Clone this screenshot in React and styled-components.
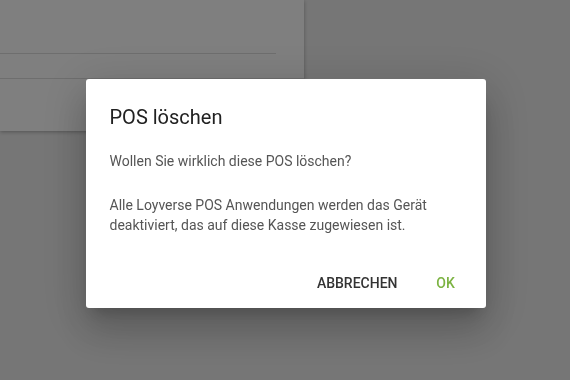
import React from "react";
import styled, { createGlobalStyle } from "styled-components";

const GlobalStyle = createGlobalStyle`
  html, body {
    margin: 0;
    padding: 0;
    background: #ededed;
    font-family: Roboto, "Liberation Sans", sans-serif;
    width: 570px;
    height: 380px;
    overflow: hidden;
  }
`;

const Page = styled.div`
  width: 570px;
  height: 380px;
`;

const Card = styled.div`
  width: 304px;
  background: #fff;
  box-shadow: 0 1px 4px rgba(0, 0, 0, 0.3);
`;

const CardRow = styled.div`
  height: ${(p) => p.h}px;
  margin-right: ${(p) => p.inset || 0}px;
  border-bottom: ${(p) => (p.line ? "1px solid #dcdcdc" : "none")};
`;

const Overlay = styled.div`
  position: fixed;
  inset: 0;
  background: rgba(0, 0, 0, 0.5);
  display: flex;
  align-items: flex-start;
  justify-content: center;
  padding-top: 79px;
  padding-left: 1px;
`;

const Dialog = styled.div`
  width: 400px;
  background: #fff;
  border-radius: 3px;
  box-shadow: 0 11px 15px -7px rgba(0, 0, 0, 0.2),
    0 24px 38px 3px rgba(0, 0, 0, 0.14), 0 9px 46px 8px rgba(0, 0, 0, 0.12);
  display: flex;
  flex-direction: column;
`;

const Title = styled.h2`
  margin: 0;
  padding: 24px 24px 20px;
  font-size: 20px;
  line-height: 28px;
  font-weight: 400;
  color: #212121;
`;

const Content = styled.div`
  padding: 0 24px 24px;
`;

const Text = styled.p`
  margin: 0 0 24px;
  font-size: 14px;
  line-height: 20px;
  color: #555;
  &:last-child {
    margin-bottom: 0;
  }
`;

const Actions = styled.div`
  display: flex;
  justify-content: flex-end;
  gap: 8px;
  padding: 6px 8px 7px;
`;

const Button = styled.button`
  min-width: 64px;
  height: 36px;
  padding: 0 8px;
  border: none;
  background: transparent;
  border-radius: 2px;
  font-family: Roboto, "Liberation Sans", sans-serif;
  font-size: 14px;
  font-weight: 500;
  text-transform: uppercase;
  color: ${(p) => (p.primary ? "#7cb342" : "#333")};
  cursor: pointer;
`;

export default function App() {
  return (
    <>
      <GlobalStyle />
      <Page>
        <Card>
          <CardRow h={53} inset={28} line />
          <CardRow h={24} line />
          <CardRow h={52} />
        </Card>
      </Page>
      <Overlay>
        <Dialog>
          <Title>POS löschen</Title>
          <Content>
            <Text>Wollen Sie wirklich diese POS löschen?</Text>
            <Text>
              Alle Loyverse POS Anwendungen werden das Gerät deaktiviert, das
              auf diese Kasse zugewiesen ist.
            </Text>
          </Content>
          <Actions>
            <Button>Abbrechen</Button>
            <Button primary>OK</Button>
          </Actions>
        </Dialog>
      </Overlay>
    </>
  );
}
